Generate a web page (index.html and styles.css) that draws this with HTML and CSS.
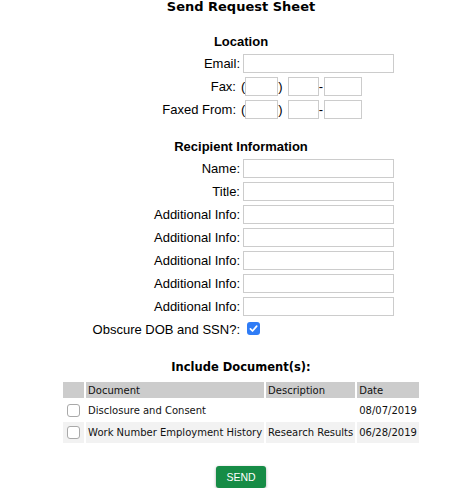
FILE: index.html
```html
<!DOCTYPE html>
<html lang="en">
<head>
<meta charset="utf-8">
<title>Send Request Sheet</title>
<link rel="stylesheet" href="styles.css">
</head>
<body>
<div class="page">
  <h1 class="page-title">Send Request Sheet</h1>

  <section class="group group--location">
    <h2 class="group-title">Location</h2>
    <div class="form-grid">
      <label class="field-label">Email:</label>
      <div class="field"><input class="text-input text-input--wide" type="text"></div>

      <label class="field-label field-label--phone">Fax:</label>
      <div class="field field--phone">
        <span class="paren paren--open">(</span><input class="text-input text-input--area" type="text"><span class="paren">)</span><input class="text-input text-input--prefix" type="text"><span class="dash">-</span><input class="text-input text-input--line" type="text">
      </div>

      <label class="field-label field-label--phone">Faxed From:</label>
      <div class="field field--phone">
        <span class="paren paren--open">(</span><input class="text-input text-input--area" type="text"><span class="paren">)</span><input class="text-input text-input--prefix" type="text"><span class="dash">-</span><input class="text-input text-input--line" type="text">
      </div>
    </div>
  </section>

  <section class="group group--recipient">
    <h2 class="group-title">Recipient Information</h2>
    <div class="form-grid">
      <label class="field-label">Name:</label>
      <div class="field"><input class="text-input text-input--wide" type="text"></div>
      <label class="field-label">Title:</label>
      <div class="field"><input class="text-input text-input--wide" type="text"></div>
      <label class="field-label">Additional Info:</label>
      <div class="field"><input class="text-input text-input--wide" type="text"></div>
      <label class="field-label">Additional Info:</label>
      <div class="field"><input class="text-input text-input--wide" type="text"></div>
      <label class="field-label">Additional Info:</label>
      <div class="field"><input class="text-input text-input--wide" type="text"></div>
      <label class="field-label">Additional Info:</label>
      <div class="field"><input class="text-input text-input--wide" type="text"></div>
      <label class="field-label">Additional Info:</label>
      <div class="field"><input class="text-input text-input--wide" type="text"></div>
      <label class="field-label">Obscure DOB and SSN?:</label>
      <div class="field field--check">
        <span class="checkbox checkbox--on" role="checkbox" aria-checked="true">
          <svg width="13" height="13" viewBox="0 0 13 13"><rect x="0" y="0" width="13" height="13" rx="3" fill="#2f7cf6"/><path d="M3.4 6.9 L5.5 9 L9.7 4.1" fill="none" stroke="#fff" stroke-width="1.7" stroke-linecap="round" stroke-linejoin="round"/></svg>
        </span>
      </div>
    </div>
  </section>

  <section class="group group--documents">
    <h2 class="docs-title">Include Document(s):</h2>
    <table class="docs-table">
      <thead>
        <tr class="docs-head">
          <th class="col-check"></th>
          <th>Document</th>
          <th>Description</th>
          <th>Date</th>
        </tr>
      </thead>
      <tbody>
        <tr class="docs-row">
          <td class="col-check"><span class="checkbox checkbox--off" role="checkbox" aria-checked="false"></span></td>
          <td>Disclosure and Consent</td>
          <td></td>
          <td>08/07/2019</td>
        </tr>
        <tr class="docs-row docs-row--alt">
          <td class="col-check"><span class="checkbox checkbox--off" role="checkbox" aria-checked="false"></span></td>
          <td>Work Number Employment History</td>
          <td>Research Results</td>
          <td>06/28/2019</td>
        </tr>
      </tbody>
    </table>
  </section>

  <div class="actions">
    <button class="send-btn" type="button">SEND</button>
  </div>
</div>
</body>
</html>
```

FILE: styles.css
```css
html, body {
  margin: 0;
  padding: 0;
  background: #ffffff;
}

body {
  font-family: "Liberation Sans", Arial, sans-serif;
  font-size: 13px;
  color: #000;
}

.page {
  width: 466px;
  margin-left: 8px;
}

.page-title {
  margin: 0;
  font-family: "DejaVu Sans", Verdana, sans-serif;
  font-weight: bold;
  font-size: 13px;
  line-height: 14px;
  text-align: center;
}

.group-title {
  margin: 0 0 4px;
  font-family: "Liberation Sans", Arial, sans-serif;
  font-weight: bold;
  font-size: 13px;
  line-height: 16px;
  text-align: center;
}

.group--location { margin-top: 20px; }
.group--recipient { margin-top: 20px; }
.group--documents { margin-top: 21px; }

.form-grid {
  display: grid;
  grid-template-columns: 232px 1fr;
  column-gap: 3px;
  row-gap: 4px;
  grid-auto-rows: 19px;
}

.field-label {
  display: flex;
  align-items: center;
  justify-content: flex-end;
  white-space: nowrap;
}

.field-label--phone {
  padding-right: 4px;
}

.field {
  display: flex;
  align-items: center;
}

.text-input {
  box-sizing: border-box;
  height: 19px;
  margin: 0;
  padding: 0 2px;
  border: 1px solid #cccccc;
  border-radius: 0;
  background: #fff;
  font: 13px "Liberation Sans", Arial, sans-serif;
  outline: none;
}

.text-input--wide { width: 151px; }
.text-input--area { width: 33px; }
.text-input--prefix { width: 31px; margin-left: 5px; }
.text-input--line { width: 38px; margin-left: 1px; }

.paren, .dash {
  line-height: 19px;
}

.paren--open {
  margin-left: -2px;
}

.field--check {
  align-items: flex-start;
}

.checkbox {
  display: block;
  width: 13px;
  height: 13px;
  box-sizing: border-box;
}

.checkbox--on {
  margin: 2px 0 0 4px;
}

.checkbox--on svg {
  display: block;
}

.checkbox--off {
  border: 1px solid #a9a9a9;
  border-radius: 3px;
  background: #fff;
  margin-left: 4px;
}

.docs-title {
  margin: 0;
  font-family: "DejaVu Sans", Verdana, sans-serif;
  font-weight: bold;
  font-size: 11.5px;
  line-height: 14px;
  text-align: center;
}

.docs-table {
  margin: 6px auto 0;
  border-collapse: separate;
  border-spacing: 2px;
  font-family: "DejaVu Sans", Verdana, sans-serif;
  font-size: 10px;
  color: #111;
}

.docs-table th,
.docs-table td {
  padding: 0 2px;
  text-align: left;
  font-weight: normal;
  white-space: nowrap;
  vertical-align: middle;
}

.docs-head th {
  height: 16px;
  background: #cccccc;
}

.docs-row td {
  height: 20px;
}

.docs-row--alt td {
  height: 21px;
  background: #f2f2f2;
}

.docs-table .col-check {
  width: 21px;
  padding: 0;
}

.actions {
  display: flex;
  justify-content: center;
  margin-top: 21px;
}

.send-btn {
  width: 50px;
  height: 22px;
  margin: 0;
  padding: 0;
  border: none;
  border-radius: 3px;
  background: #168c46;
  color: #fff;
  font: 10.5px "Liberation Sans", Arial, sans-serif;
  box-shadow: 0 1px 3px rgba(0, 0, 0, 0.35);
  cursor: pointer;
}
```
